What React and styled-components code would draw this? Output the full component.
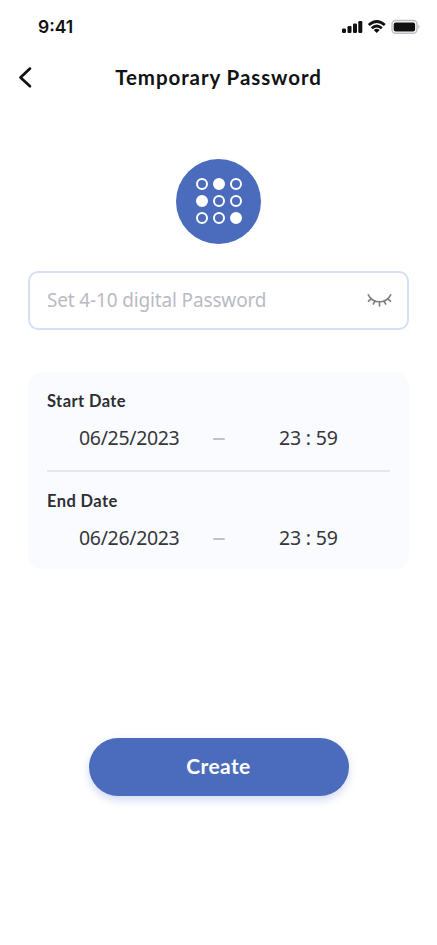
import React from "react";
import styled, { createGlobalStyle } from "styled-components";

const GlobalStyle = createGlobalStyle`
  *, *::before, *::after { box-sizing: border-box; }
  body { margin: 0; background: #fff; font-family: "Noto Sans", sans-serif; }
`;

const Screen = styled.main`
  display: flex;
  flex-direction: column;
  width: 437px;
  height: 945px;
  background: #fff;
  overflow: hidden;
`;

const StatusBar = styled.div`
  display: flex;
  align-items: center;
  justify-content: space-between;
  height: 54px;
  padding: 0 16px 0 38px;
`;

const Clock = styled.span`
  font: 600 17.5px/24px "Inter", sans-serif;
  color: #111;
`;

const NavBar = styled.header`
  display: grid;
  grid-template-columns: 52px 1fr 52px;
  align-items: center;
  height: 46px;
`;

const BackButton = styled.button`
  display: flex;
  width: 52px;
  height: 46px;
  padding: 0;
  border: 0;
  background: none;
`;

const Title = styled.h1`
  margin: 0;
  font: 700 20.5px/28px "Lato", sans-serif;
  letter-spacing: 0.92px;
  text-align: center;
  white-space: nowrap;
  color: #111214;
`;

const Badge = styled.div`
  display: grid;
  grid-template-columns: repeat(3, 12px);
  grid-auto-rows: 12px;
  gap: 5px;
  place-content: center;
  align-self: center;
  width: 85px;
  height: 85px;
  margin-top: 58.5px;
  border-radius: 50%;
  background: #4b6cbc;
`;

const Dot = styled.span`
  border: 2px solid #fff;
  border-radius: 50%;
  background: ${(p) => (p.$filled ? "#fff" : "transparent")};
`;

const PasswordField = styled.div`
  display: flex;
  align-items: center;
  justify-content: space-between;
  height: 59px;
  margin: 27.5px 28px 0;
  padding: 0 14px 2px 17px;
  border: 2px solid #d5dff5;
  border-radius: 10px;
`;

const Placeholder = styled.span`
  font-size: 19px;
  line-height: 26px;
  letter-spacing: -0.15px;
  color: #b9bac3;
`;

const Card = styled.section`
  margin: 42px 28px 0;
  padding: 0 19px;
  height: 197px;
  border-radius: 14px;
  background: #fafbff;
`;

const DateGroup = styled.div`
  height: ${(p) => (p.$divided ? "100px" : "97px")};
  padding-top: 17px;
  border-bottom: ${(p) => (p.$divided ? "2px solid #e5e7f0" : "0")};
`;

const GroupLabel = styled.h2`
  margin: 0;
  font: 700 16.5px/24px "Lato", sans-serif;
  letter-spacing: 0.4px;
  color: #2e2f33;
`;

const DateRow = styled.div`
  display: grid;
  grid-template-columns: 134px 66px 1fr;
  align-items: center;
  height: 50px;
  padding-left: 32px;
  font-size: 19.5px;
  line-height: 28px;
  letter-spacing: -0.33px;
  color: #36373b;
`;

const Time = styled.span`
  letter-spacing: -0.2px;
`;

const Dash = styled.span`
  width: 12px;
  height: 2px;
  margin-top: 1px;
  border-radius: 1px;
  background: #c0c1c7;
`;

const CreateButton = styled.button`
  align-self: center;
  width: 260px;
  height: 58px;
  margin-top: 169px;
  padding: 0 0 2px;
  border: 0;
  border-radius: 29px;
  background: #4b6cbc;
  box-shadow: 0 4px 8px rgba(75, 108, 200, 0.25);
  font: 700 21px/28px "Lato", sans-serif;
  letter-spacing: 0.4px;
  color: #fff;
`;

const pattern = [0, 1, 0, 1, 0, 0, 0, 0, 1];

const dates = [
  { label: "Start Date", date: "06/25/2023", time: "23 : 59" },
  { label: "End Date", date: "06/26/2023", time: "23 : 59" },
];

const StatusIcons = () => (
  <svg width="80" height="16" viewBox="341 19 80 16" fill="none">
    <g fill="#111">
      <rect x="342" y="28.5" width="4" height="4.5" rx="1.2" />
      <rect x="347.5" y="26" width="4" height="7" rx="1.2" />
      <rect x="353" y="23.5" width="4" height="9.5" rx="1.2" />
      <rect x="358.3" y="21" width="4" height="12" rx="1.2" />
      <path d="M376.7 33 L373.7 30 Q376.7 27.4 379.7 30Z" />
    </g>
    <g stroke="#111" strokeWidth="2.7">
      <path d="M368.8 25.1 Q376.7 17.9 384.8 25.1" />
      <path d="M371.7 28.2 Q376.7 23.8 381.8 28.2" />
    </g>
    <rect x="392" y="20.5" width="25" height="12.8" rx="3.8" stroke="#bdbbc2" strokeWidth="1.4" />
    <rect x="393.7" y="22.4" width="21.4" height="9" rx="2" fill="#111" />
    <path d="M418.4 24.8 Q420.8 26.8 418.4 28.8Z" fill="#bdbbc2" />
  </svg>
);

const BackIcon = () => (
  <svg width="52" height="46" viewBox="0 54 52 46" fill="none" stroke="#111" strokeWidth="2.7" strokeLinecap="round" strokeLinejoin="round">
    <path d="M30 68.6 L20.5 77.4 L30 86.2" />
  </svg>
);

const ClosedEyeIcon = () => (
  <svg width="26" height="16" viewBox="367.5 293 26 16" fill="none" stroke="#7d7e84" strokeWidth="1.6" strokeLinecap="round">
    <path d="M368.8 295.8 C371 300 375 302.8 380 302.8 C385 302.8 389 300 391.2 295.8" />
    <path d="M371.8 299.8 L369 302.2 M375.5 302 L373.8 305.1 M380 303 V307 M384.5 302 L386.2 305.1 M388.2 299.8 L391 302.2" />
  </svg>
);

export default function App() {
  return (
    <>
      <GlobalStyle />
      <Screen>
        <StatusBar>
          <Clock>9:41</Clock>
          <StatusIcons />
        </StatusBar>
        <NavBar>
          <BackButton aria-label="Back"><BackIcon /></BackButton>
          <Title>Temporary Password</Title>
        </NavBar>
        <Badge>
          {pattern.map((on, i) => <Dot key={i} $filled={Boolean(on)} />)}
        </Badge>
        <PasswordField>
          <Placeholder>Set 4-10 digital Password</Placeholder>
          <ClosedEyeIcon />
        </PasswordField>
        <Card>
          {dates.map((d, i) => (
            <DateGroup key={d.label} $divided={i === 0}>
              <GroupLabel>{d.label}</GroupLabel>
              <DateRow>
                <span>{d.date}</span>
                <Dash />
                <Time>{d.time}</Time>
              </DateRow>
            </DateGroup>
          ))}
        </Card>
        <CreateButton>Create</CreateButton>
      </Screen>
    </>
  );
}
